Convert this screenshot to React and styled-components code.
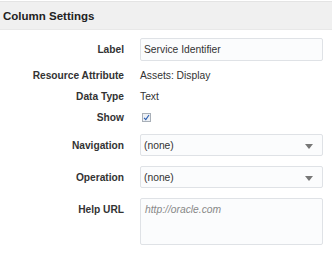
import React from 'react'
import styled, { createGlobalStyle } from 'styled-components'

const GlobalStyle = createGlobalStyle`
  body {
    margin: 0;
    background: #fff;
    font-family: "Liberation Sans", Arial, sans-serif;
    color: #333;
  }
`

const Panel = styled.div`
  width: 332px;
  height: 258px;
  overflow: hidden;
`

const Header = styled.div`
  margin-top: 1px;
  height: 27px;
  display: flex;
  align-items: center;
  padding-left: 3px;
  background: #f0f0f0;
  border-top: 1px solid #e4e4e4;
  border-bottom: 1px solid #e8e8e8;
  font-size: 11.5px;
  font-weight: bold;
  color: #222;
`

const Form = styled.div`
  display: flex;
  flex-direction: column;
  padding-top: 8px;
`

const Row = styled.div`
  display: grid;
  grid-template-columns: 124px 183px;
  column-gap: 16px;
  align-items: ${p => (p.$top ? 'start' : 'center')};
  min-height: ${p => p.$h || 21}px;
  margin-top: ${p => p.$mt || 0}px;
`

const Label = styled.div`
  text-align: right;
  font-size: 10.2px;
  font-weight: bold;
  color: #333;
  padding-top: ${p => (p.$top ? 6 : 0)}px;
`

const Value = styled.div`
  font-size: 10.3px;
  color: #333;
`

const Field = styled.div`
  box-sizing: border-box;
  height: ${p => p.$h}px;
  background: #fbfcfd;
  border: 1px solid #dfe2e6;
  border-radius: 2px;
  display: flex;
  align-items: ${p => (p.$multi ? 'flex-start' : 'center')};
  justify-content: space-between;
  padding: ${p => (p.$multi ? '5px 4px' : '0 9px 0 3px')};
  font-size: 10.3px;
  color: #333;
`

const Placeholder = styled.span`
  font-style: italic;
  color: #888;
`

const Arrow = styled.span`
  width: 0;
  height: 0;
  border-left: 4px solid transparent;
  border-right: 4px solid transparent;
  border-top: 5px solid #777;
  margin-top: 2px;
`

const Check = styled.div`
  box-sizing: border-box;
  width: 9px;
  height: 9px;
  margin-left: 2px;
  border: 1px solid #a9b0b8;
  background: #eef1f5;
  display: flex;
  align-items: center;
  justify-content: center;
`

const Select = ({ value }) => (
  <Field $h={22}>
    <span>{value}</span>
    <Arrow />
  </Field>
)

export default function App() {
  return (
    <Panel>
      <GlobalStyle />
      <Header>Column Settings</Header>
      <Form>
        <Row $h={23}>
          <Label>Label</Label>
          <Field $h={23}>Service Identifier</Field>
        </Row>
        <Row $mt={4}>
          <Label>Resource Attribute</Label>
          <Value>Assets: Display</Value>
        </Row>
        <Row>
          <Label>Data Type</Label>
          <Value>Text</Value>
        </Row>
        <Row>
          <Label>Show</Label>
          <Check>
            <svg width="7" height="7" viewBox="0 0 7 7">
              <path d="M1 3.8 L2.8 5.6 L6 1" fill="none" stroke="#2a5db0" strokeWidth="1.1" />
            </svg>
          </Check>
        </Row>
        <Row $mt={6} $h={22}>
          <Label>Navigation</Label>
          <Select value="(none)" />
        </Row>
        <Row $mt={10} $h={22}>
          <Label>Operation</Label>
          <Select value="(none)" />
        </Row>
        <Row $mt={10} $h={47} $top>
          <Label $top>Help URL</Label>
          <Field $h={47} $multi>
            <Placeholder>http://oracle.com</Placeholder>
          </Field>
        </Row>
      </Form>
    </Panel>
  )
}
